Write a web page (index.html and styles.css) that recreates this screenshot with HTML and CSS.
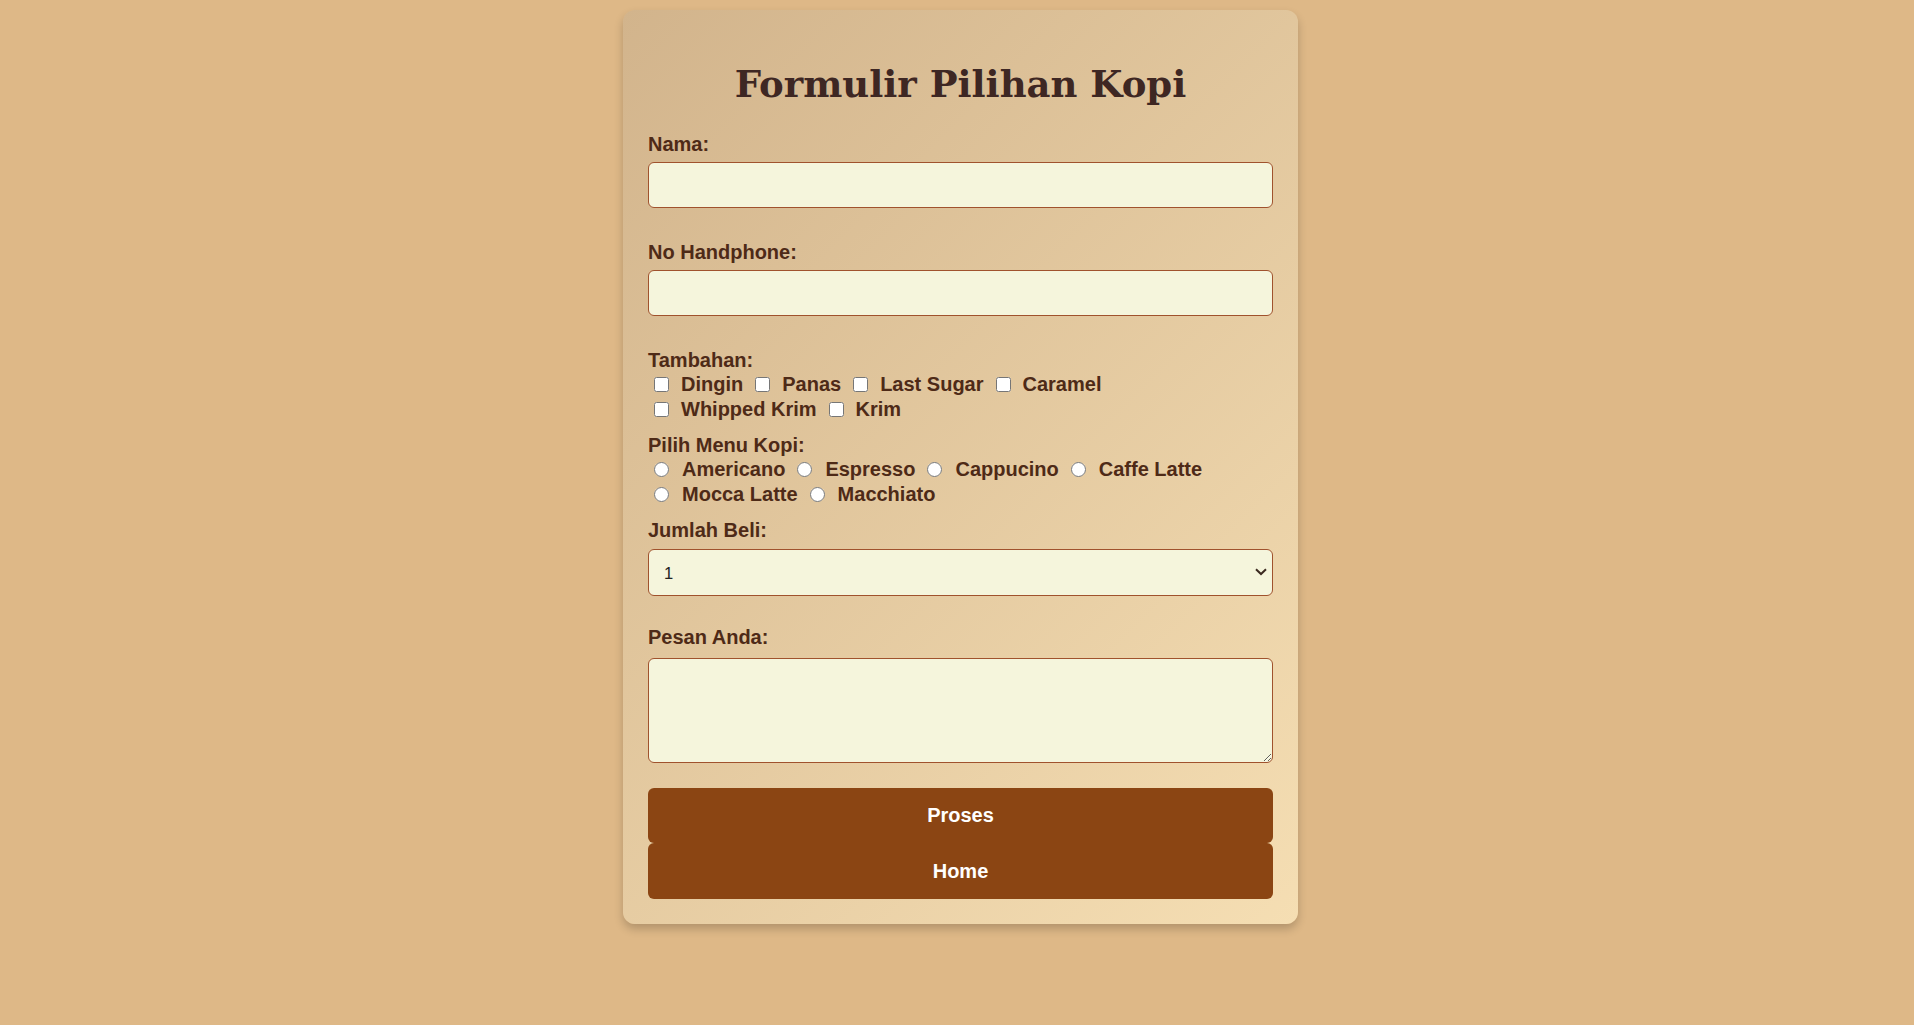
FILE: index.html
```html
<!DOCTYPE html>
<html lang="id">
<head>
<meta charset="utf-8">
<title>Formulir Pilihan Kopi</title>
<link rel="stylesheet" href="styles.css">
</head>
<body>
<form class="card">
  <h1 class="title">Formulir Pilihan Kopi</h1>

  <label class="field-label" for="nama">Nama:</label>
  <input class="text-input" type="text" id="nama">

  <label class="field-label" for="hp">No Handphone:</label>
  <input class="text-input" type="text" id="hp">

  <span class="field-label group-label">Tambahan:</span>
  <div class="opt-row">
    <label class="opt"><input type="checkbox" class="box"><span>Dingin</span></label>
    <label class="opt"><input type="checkbox" class="box"><span>Panas</span></label>
    <label class="opt"><input type="checkbox" class="box"><span>Last Sugar</span></label>
    <label class="opt"><input type="checkbox" class="box"><span>Caramel</span></label>
  </div>
  <div class="opt-row">
    <label class="opt"><input type="checkbox" class="box"><span>Whipped Krim</span></label>
    <label class="opt"><input type="checkbox" class="box"><span>Krim</span></label>
  </div>

  <span class="field-label group-label">Pilih Menu Kopi:</span>
  <div class="opt-row radio-row">
    <label class="opt"><input type="radio" name="kopi" class="box"><span>Americano</span></label>
    <label class="opt"><input type="radio" name="kopi" class="box"><span>Espresso</span></label>
    <label class="opt"><input type="radio" name="kopi" class="box"><span>Cappucino</span></label>
    <label class="opt"><input type="radio" name="kopi" class="box"><span>Caffe Latte</span></label>
  </div>
  <div class="opt-row radio-row">
    <label class="opt"><input type="radio" name="kopi" class="box"><span>Mocca Latte</span></label>
    <label class="opt"><input type="radio" name="kopi" class="box"><span>Macchiato</span></label>
  </div>

  <label class="field-label select-label" for="jumlah">Jumlah Beli:</label>
  <div class="select-wrap">
    <select class="select-input" id="jumlah">
      <option>1</option>
      <option>2</option>
      <option>3</option>
      <option>4</option>
      <option>5</option>
    </select>
    <svg class="chevron" width="12" height="8" viewBox="0 0 12 8" aria-hidden="true">
      <path d="M1 1.2 L6 6 L11 1.2" fill="none" stroke="#3b2a20" stroke-width="2"/>
    </svg>
  </div>

  <label class="field-label msg-label" for="pesan">Pesan Anda:</label>
  <textarea class="area-input" id="pesan"></textarea>

  <button type="button" class="btn">Proses</button>
  <button type="button" class="btn btn-last">Home</button>
</form>
</body>
</html>
```

FILE: styles.css
```css
html, body {
  margin: 0;
  padding: 0;
}

body {
  background: #deb887;
  font-family: "Liberation Sans", Arial, sans-serif;
  display: flex;
  justify-content: center;
  align-items: flex-start;
  padding: 10px 0 0 7px;
  min-height: 1015px;
}

.card {
  width: 675px;
  box-sizing: border-box;
  padding: 25px;
  border-radius: 12px;
  background: linear-gradient(135deg, #d2b48c 0%, #f5deb3 100%);
  box-shadow: 0 5px 10px rgba(0, 0, 0, 0.2);
  display: flex;
  flex-direction: column;
}

.title {
  margin: 27px 0 15px;
  font-family: "DejaVu Serif", Georgia, serif;
  font-weight: bold;
  font-size: 37px;
  line-height: 44px;
  text-align: center;
  color: #3e2723;
}

.field-label {
  display: block;
  margin: 12px 0 6px;
  font-size: 20px;
  line-height: 23px;
  font-weight: bold;
  color: #4e2a17;
}

.group-label {
  margin-bottom: 0;
}

.select-label {
  margin-bottom: 7px;
}

.msg-label {
  margin-bottom: 9px;
}

.text-input,
.select-input,
.area-input {
  box-sizing: border-box;
  width: 100%;
  border: 1px solid #a0522d;
  border-radius: 6px;
  background-color: #f5f5dc;
  font-family: "Liberation Sans", Arial, sans-serif;
  font-size: 16.5px;
  color: #222;
  margin: 0;
}

.text-input {
  height: 46px;
  padding: 0 12px;
  margin-bottom: 21px;
}

.select-wrap {
  position: relative;
  margin-bottom: 18px;
}

.select-input {
  display: block;
  height: 47px;
  padding: 0 12px 0 15px;
  appearance: none;
  -webkit-appearance: none;
}

.chevron {
  position: absolute;
  right: 6px;
  top: 19px;
  pointer-events: none;
}

.area-input {
  height: 105px;
  padding: 12px;
  margin-bottom: 25px;
  resize: vertical;
}

.opt-row {
  display: flex;
  align-items: center;
  gap: 12px;
  height: 25px;
  padding-left: 6px;
}

.opt {
  display: flex;
  align-items: center;
  gap: 12px;
  font-size: 20px;
  line-height: 23px;
  font-weight: bold;
  color: #4e2a17;
}

.radio-row .opt {
  gap: 13px;
}

.box {
  width: 15px;
  height: 15px;
  margin: 0;
}

.btn {
  display: block;
  width: 100%;
  height: 55px;
  border: none;
  border-radius: 6px;
  background: #8b4513;
  color: #ffffff;
  font-family: "Liberation Sans", Arial, sans-serif;
  font-size: 20px;
  font-weight: bold;
  padding: 0;
  margin: 0;
}

.btn-last {
  height: 56px;
}
```
